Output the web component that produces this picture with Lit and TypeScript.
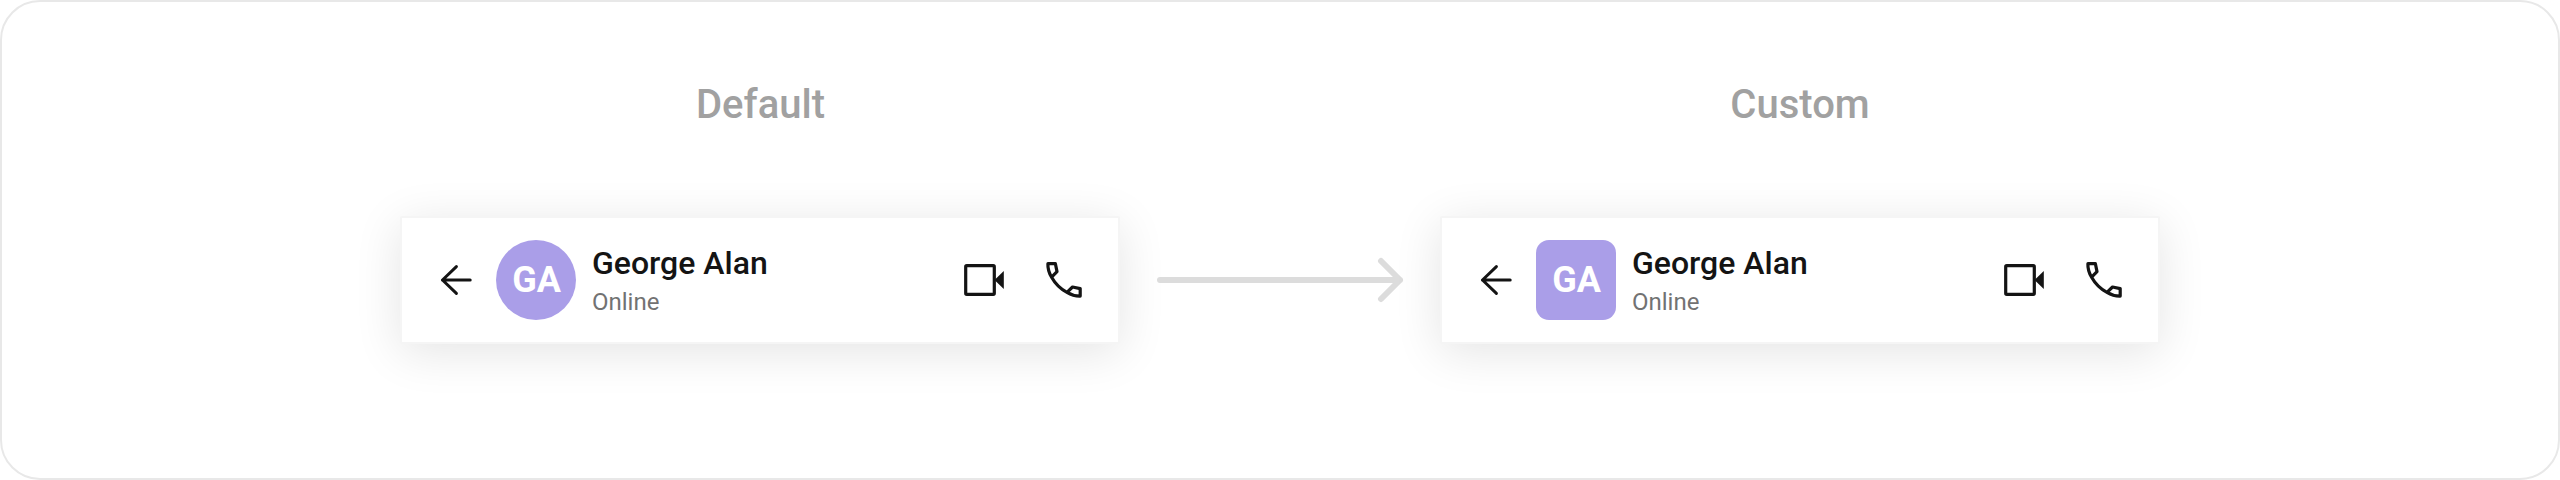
import { LitElement, html, css } from "lit";
import { customElement, property } from "lit/decorators.js";
import { classMap } from "lit/directives/class-map.js";

@customElement("chat-header")
class ChatHeader extends LitElement {
  @property({ type: Boolean }) square = false;

  static styles = css`
    :host {
      display: block;
    }
    .bar {
      box-sizing: border-box;
      width: 720px;
      height: 128px;
      display: flex;
      align-items: center;
      padding: 0 30px;
      background: #fff;
      border: 2px solid #f5f5f5;
      border-radius: 2px;
      box-shadow: 0 8px 48px rgba(0, 0, 0, 0.11);
    }
    svg {
      display: block;
      flex: none;
      width: 48px;
      height: 48px;
      color: #141414;
    }
    .avatar {
      flex: none;
      width: 80px;
      height: 80px;
      margin-left: 16px;
      border-radius: 50%;
      background: #aa9ee8;
      color: #fff;
      font-size: 36px;
      font-weight: 700;
      line-height: 80px;
      text-align: center;
      text-indent: 1px;
    }
    .avatar.square {
      border-radius: 13px;
    }
    .who {
      flex: 1;
      margin-left: 16px;
    }
    .name {
      margin-bottom: 2px;
      font-size: 32px;
      font-weight: 500;
      line-height: 42px;
      color: #141414;
    }
    .status {
      font-size: 24px;
      line-height: 32px;
      color: #727272;
    }
    .actions {
      display: flex;
      gap: 32px;
    }
  `;

  render() {
    return html`
      <div class="bar">
        <svg viewBox="0 0 48 48" fill="none" stroke="currentColor" stroke-width="3" stroke-linecap="round" stroke-linejoin="round">
          <path d="M38.2 24H10.4M24.4 10.6L10.5 24L24.4 37.4" />
        </svg>
        <div class=${classMap({ avatar: true, square: this.square })}>GA</div>
        <div class="who">
          <div class="name">George Alan</div>
          <div class="status">Online</div>
        </div>
        <div class="actions">
          <svg viewBox="0 0 48 48">
            <rect x="5.7" y="9.7" width="28.6" height="28.6" rx="1" fill="none" stroke="currentColor" stroke-width="3.2" />
            <path d="M34.5 24L43.8 15V33Z" fill="currentColor" />
          </svg>
          <svg viewBox="0 0 48 48" fill="none" stroke="currentColor" stroke-width="3.2" stroke-linejoin="round">
            <path d="M7.9 7.7H15.4L17 15.6L11.6 21.2C8.9 16.7 7.7 12.2 7.9 7.7ZM11.6 21.2C15.3 27.8 20.4 32.8 27 36.4L32.5 31L40.2 32.6V40.1C35.6 40.2 31.3 39 27 36.4" />
          </svg>
        </div>
      </div>
    `;
  }
}

@customElement("app-root")
class AppRoot extends LitElement {
  static styles = css`
    :host {
      display: block;
      font-family: Roboto, sans-serif;
    }
    .frame {
      box-sizing: border-box;
      width: 2560px;
      height: 480px;
      padding: 79px 398px 0;
      display: flex;
      align-items: flex-start;
      border: 2px solid #e8e8e8;
      border-radius: 40px;
      background: #fff;
    }
    .column {
      width: 720px;
    }
    .title {
      height: 48px;
      margin-bottom: 87px;
      font-size: 40px;
      font-weight: 500;
      line-height: 48px;
      text-align: center;
      color: #a1a1a1;
    }
    .title.nudged {
      text-indent: 1px;
    }
    .between {
      width: 320px;
      height: 128px;
      padding-top: 135px;
      display: flex;
      align-items: center;
      justify-content: center;
    }
    .arrow {
      display: block;
      width: 248px;
      height: 48px;
    }
  `;

  render() {
    return html`
      <div class="frame">
        <div class="column">
          <div class="title nudged">Default</div>
          <chat-header></chat-header>
        </div>
        <div class="between">
          <svg class="arrow" viewBox="0 0 248 48" fill="none" stroke="#dcdcdc" stroke-width="6" stroke-linecap="round" stroke-linejoin="round">
            <path d="M4 24H244M225 5L244 24L225 43" />
          </svg>
        </div>
        <div class="column">
          <div class="title">Custom</div>
          <chat-header square></chat-header>
        </div>
      </div>
    `;
  }
}
